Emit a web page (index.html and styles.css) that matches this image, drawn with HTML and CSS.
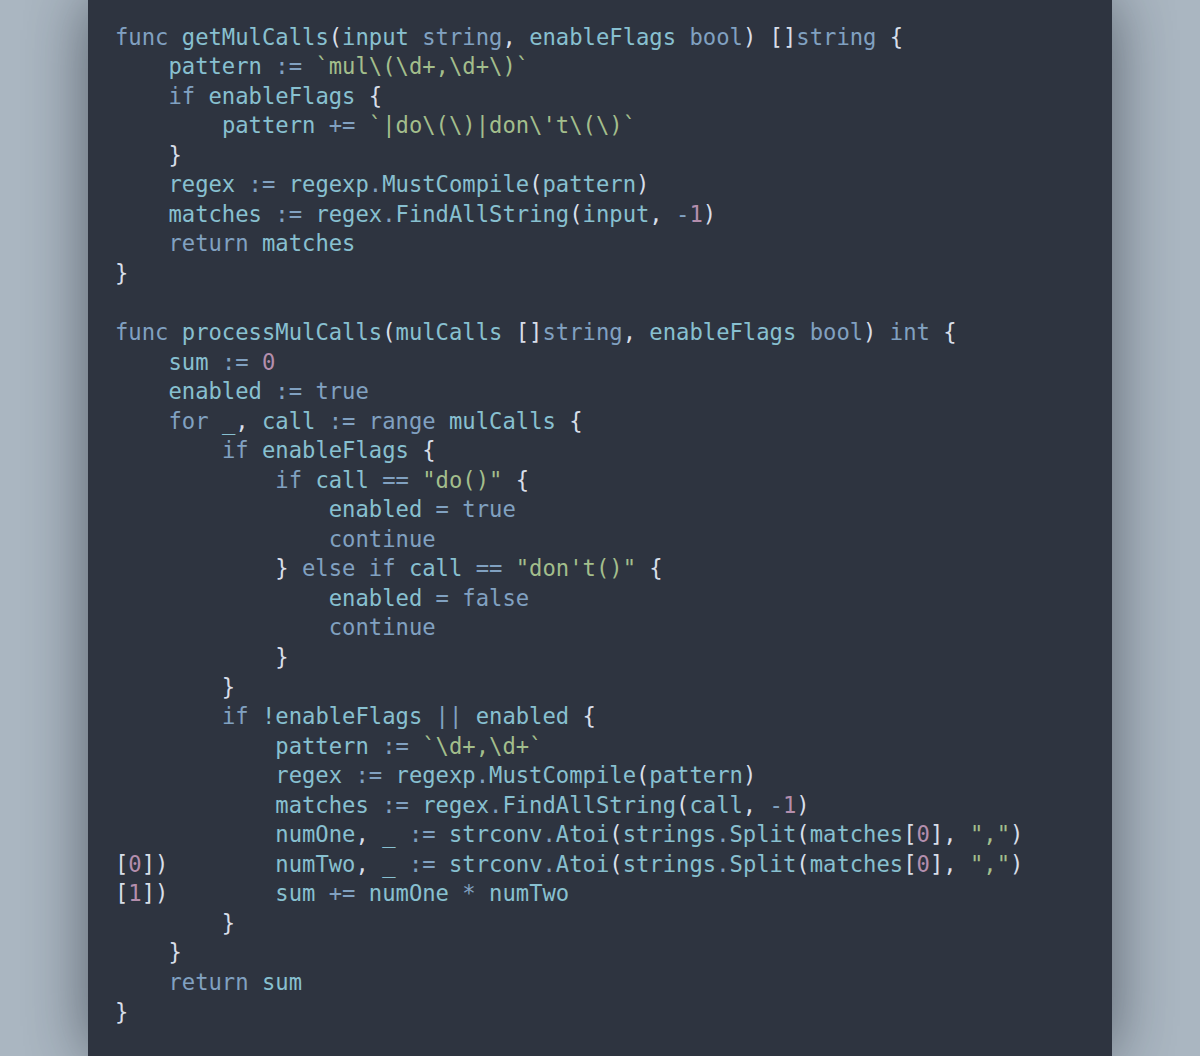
FILE: index.html
```html
<!DOCTYPE html>
<html>
<head>
<meta charset="utf-8">
<link rel="stylesheet" href="styles.css">
</head>
<body>
<main class="panel">
<pre class="code"><span class="k">func</span> <span class="v">getMulCalls</span>(<span class="v">input</span> <span class="k">string</span>, <span class="v">enableFlags</span> <span class="k">bool</span>) []<span class="k">string</span> {
    <span class="v">pattern</span> <span class="k">:=</span> <span class="s">`mul\(\d+,\d+\)`</span>
    <span class="k">if</span> <span class="v">enableFlags</span> {
        <span class="v">pattern</span> <span class="k">+=</span> <span class="s">`|do\(\)|don\'t\(\)`</span>
    }
    <span class="v">regex</span> <span class="k">:=</span> <span class="v">regexp</span><span class="k">.</span><span class="v">MustCompile</span>(<span class="v">pattern</span>)
    <span class="v">matches</span> <span class="k">:=</span> <span class="v">regex</span><span class="k">.</span><span class="v">FindAllString</span>(<span class="v">input</span>, <span class="k">-</span><span class="n">1</span>)
    <span class="k">return</span> <span class="v">matches</span>
}

<span class="k">func</span> <span class="v">processMulCalls</span>(<span class="v">mulCalls</span> []<span class="k">string</span>, <span class="v">enableFlags</span> <span class="k">bool</span>) <span class="k">int</span> {
    <span class="v">sum</span> <span class="k">:=</span> <span class="n">0</span>
    <span class="v">enabled</span> <span class="k">:=</span> <span class="k">true</span>
    <span class="k">for</span> <span class="v">_</span>, <span class="v">call</span> <span class="k">:=</span> <span class="k">range</span> <span class="v">mulCalls</span> {
        <span class="k">if</span> <span class="v">enableFlags</span> {
            <span class="k">if</span> <span class="v">call</span> <span class="k">==</span> <span class="s">"do()"</span> {
                <span class="v">enabled</span> <span class="k">=</span> <span class="k">true</span>
                <span class="k">continue</span>
            } <span class="k">else</span> <span class="k">if</span> <span class="v">call</span> <span class="k">==</span> <span class="s">"don't()"</span> {
                <span class="v">enabled</span> <span class="k">=</span> <span class="k">false</span>
                <span class="k">continue</span>
            }
        }
        <span class="k">if</span> <span class="v">!enableFlags</span> <span class="k">||</span> <span class="v">enabled</span> {
            <span class="v">pattern</span> <span class="k">:=</span> <span class="s">`\d+,\d+`</span>
            <span class="v">regex</span> <span class="k">:=</span> <span class="v">regexp</span><span class="k">.</span><span class="v">MustCompile</span>(<span class="v">pattern</span>)
            <span class="v">matches</span> <span class="k">:=</span> <span class="v">regex</span><span class="k">.</span><span class="v">FindAllString</span>(<span class="v">call</span>, <span class="k">-</span><span class="n">1</span>)
            <span class="v">numOne</span>, <span class="v">_</span> <span class="k">:=</span> <span class="v">strconv</span><span class="k">.</span><span class="v">Atoi</span>(<span class="v">strings</span><span class="k">.</span><span class="v">Split</span>(<span class="v">matches</span>[<span class="n">0</span>], <span class="s">","</span>)
[<span class="n">0</span>])        <span class="v">numTwo</span>, <span class="v">_</span> <span class="k">:=</span> <span class="v">strconv</span><span class="k">.</span><span class="v">Atoi</span>(<span class="v">strings</span><span class="k">.</span><span class="v">Split</span>(<span class="v">matches</span>[<span class="n">0</span>], <span class="s">","</span>)
[<span class="n">1</span>])        <span class="v">sum</span> <span class="k">+=</span> <span class="v">numOne</span> <span class="k">*</span> <span class="v">numTwo</span>
        }
    }
    <span class="k">return</span> <span class="v">sum</span>
}</pre>
</main>
</body>
</html>
```

FILE: styles.css
```css
html, body {
  margin: 0;
  padding: 0;
  height: 100%;
}

body {
  background: #abb7c2;
  overflow: hidden;
}

.panel {
  box-sizing: border-box;
  width: 1024px;
  height: 1056px;
  margin: 0 auto;
  background: #2e3440;
  box-shadow: 0 0 60px rgba(20, 26, 36, 0.55);
  padding: 22.5px 0 0 27px;
}

.code {
  margin: 0;
  font-family: "DejaVu Sans Mono", "Liberation Mono", monospace;
  font-size: 22.2px;
  line-height: 29.55px;
  color: #d8dee9;
  white-space: pre;
  tab-size: 4;
}

.k { color: #81a1c1; }
.v { color: #88c0d0; }
.s { color: #a3be8c; }
.n { color: #b48ead; }
```
